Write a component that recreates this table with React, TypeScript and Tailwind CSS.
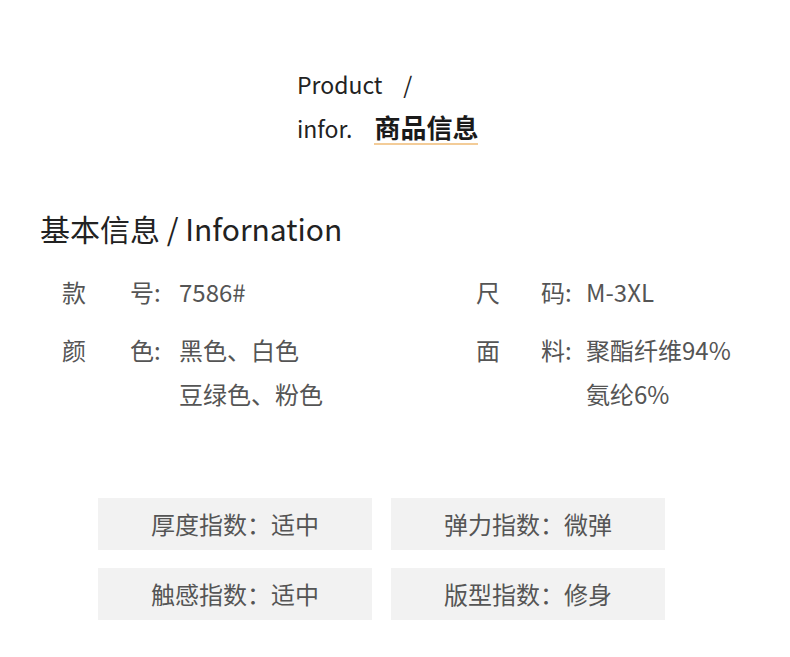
const font = { fontFamily: '"Noto Sans CJK SC", "Noto Sans", sans-serif' };

const Spec = ({ a, b, lines, gap }: { a: string; b: string; lines: string[]; gap: string }) => (
  <div className="flex items-start text-[24px] leading-[44px] text-[#555]">
    <span className={gap === "l" ? "w-[68px]" : "w-[65px]"}>{a}</span>
    <span className={gap === "l" ? "w-[49px]" : "w-[45px]"}>{b}:</span>
    <div className="flex flex-col">
      {lines.map((l, i) => (
        <span key={i}>{l}</span>
      ))}
    </div>
  </div>
);

const Tag = ({ text }: { text: string }) => (
  <div className="flex h-[52px] w-[274px] items-center justify-center bg-[#f2f2f2] text-[24px] text-[#555]">
    {text}
  </div>
);

export default function App() {
  return (
    <div className="h-[657px] w-[790px] bg-white" style={font}>
      <div className="flex flex-col pl-[297px] pt-[67px]">
        <div className="text-[23px] leading-[34px] text-[#222]">Product&nbsp;&nbsp;&nbsp;&nbsp;/</div>
        <div className="mt-[10px] flex items-end text-[23px] leading-[34px] text-[#222]">
          <span>infor.</span>
          <span className="ml-[22px] border-b-2 border-[#f3cc98] text-[26px] font-bold leading-[32px] text-[#1a1a1a]">
            商品信息
          </span>
        </div>
      </div>
      <div className="mt-[63px] pl-[40px] text-[30px] leading-[40px] text-[#222]">基本信息 / Infornation</div>
      <div className="mt-[22px] grid grid-cols-[414px_1fr] pl-[62px]">
        <div className="flex flex-col gap-[14px]">
          <Spec gap="l" a="款" b="号" lines={["7586#"]} />
          <Spec gap="l" a="颜" b="色" lines={["黑色、白色", "豆绿色、粉色"]} />
        </div>
        <div className="flex flex-col gap-[14px]">
          <Spec gap="r" a="尺" b="码" lines={["M-3XL"]} />
          <Spec gap="r" a="面" b="料" lines={["聚酯纤维94%", "氨纶6%"]} />
        </div>
      </div>
      <div className="mt-[82px] grid w-fit grid-cols-2 gap-x-[19px] gap-y-[18px] pl-[98px]">
        <Tag text="厚度指数：适中" />
        <Tag text="弹力指数：微弹" />
        <Tag text="触感指数：适中" />
        <Tag text="版型指数：修身" />
      </div>
    </div>
  );
}
